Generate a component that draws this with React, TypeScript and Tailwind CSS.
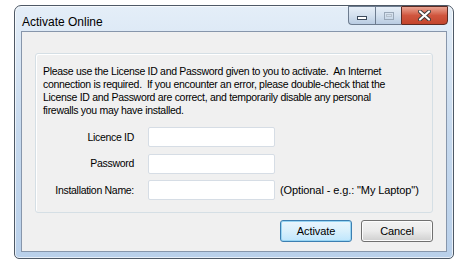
import React from 'react';

function TitleButtons() {
  return (
    <div className="flex h-[19px] items-stretch">
      <div className="w-[27px] flex items-center justify-center rounded-bl-[4px] border border-r-0 border-[#6d7c8f] bg-gradient-to-b from-[#e6eef7] via-[#d3e0ee] to-[#b9cce2]">
        <div className="w-[10px] h-[4px] mt-[5px] border border-[#3c4a5c] bg-white" />
      </div>
      <div className="w-[26px] flex items-center justify-center border border-r-0 border-[#6d7c8f] bg-gradient-to-b from-[#e6eef7] via-[#d3e0ee] to-[#b9cce2]">
        <div className="w-[10px] h-[8px] border border-[#9aa8b8] flex items-center justify-center">
          <div className="w-[6px] h-[3px] border border-[#b6c1cd]" />
        </div>
      </div>
      <div className="w-[47px] flex items-center justify-center rounded-br-[4px] border border-[#5b2b24] bg-gradient-to-b from-[#e8a493] via-[#d0553e] to-[#c3452d]">
        <svg width="13" height="11" viewBox="0 0 13 11">
          <path d="M2 1.5 L11 9.5 M11 1.5 L2 9.5" stroke="#3a3a3a" strokeWidth="4" strokeLinecap="round" />
          <path d="M2 1.5 L11 9.5 M11 1.5 L2 9.5" stroke="#ffffff" strokeWidth="2.2" strokeLinecap="round" />
        </svg>
      </div>
    </div>
  );
}

function Field({ label, note }: { label: string; note?: string }) {
  return (
    <div className="flex items-center h-[20px]">
      <div className="w-[98px] text-right text-black">{label}</div>
      <div className="ml-[14px] w-[127px] h-[20px] bg-white border border-[#d6dde5] rounded-[2px]" />
      {note && <div className="ml-[5px] text-[11px] tracking-[-0.1px] text-black">{note}</div>}
    </div>
  );
}

function Btn({ label, focused }: { label: string; focused?: boolean }) {
  return (
    <div
      className={
        'w-[72px] h-[22px] rounded-[3px] border flex items-center justify-center text-[11px] tracking-[-0.1px] text-black ' +
        (focused
          ? 'border-[#3c7fb1] bg-gradient-to-b from-[#eaf6fd] via-[#d9f0fc] to-[#bee6fd] shadow-[inset_0_0_0_1px_#98d5f3]'
          : 'border-[#707070] bg-gradient-to-b from-[#f2f2f2] via-[#ebebeb] to-[#cfcfcf] shadow-[inset_0_0_0_1px_#fcfcfc]')
      }
    >
      {label}
    </div>
  );
}

export default function App() {
  return (
    <div
      className="w-[463px] h-[266px] bg-white pt-[5px] pl-[14px] text-[10.5px] leading-[13px] tracking-[-0.3px]"
      style={{ fontFamily: '"Liberation Sans", Arial, sans-serif' }}
    >
      <div className="w-[440px] h-[254px] rounded-t-[7px] rounded-b-[5px] border border-[#4e5966] bg-gradient-to-b from-[#e4eef8] via-[#c6d9ee] to-[#b9d0ea] px-[6px] pb-[6px] flex flex-col shadow-[inset_0_0_0_1px_#ffffffaa]">
        <div className="h-[25px] flex items-start justify-between">
          <div className="pt-[9px] pl-[1px] text-[12px] leading-[14px] tracking-normal text-black">Activate Online</div>
          <div className="-mr-[1px]">
            <TitleButtons />
          </div>
        </div>
        <div className="flex-1 border border-[#8796ab] bg-[#f0f0f0] px-[13px] pt-[21px]">
          <div className="w-[398px] h-[160px] border border-[#d5dfe5] rounded-[3px] shadow-[inset_1px_1px_0_#ffffff] px-[7px] pt-[11px]">
            <p className="text-black whitespace-nowrap">
              Please use the License ID and Password given to you to activate.&nbsp; An Internet
              <br />
              connection is required.&nbsp; If you encounter an error, please double-check that the
              <br />
              License ID and Password are correct, and temporarily disable any personal
              <br />
              firewalls you may have installed.
            </p>
            <div className="mt-[10px] flex flex-col gap-[6.5px] -ml-[7px]">
              <Field label="Licence ID" />
              <Field label="Password" />
              <Field label="Installation Name:" note={'(Optional - e.g.: "My Laptop")'} />
            </div>
          </div>
          <div className="w-[398px] mt-[7px] flex justify-end gap-[9px]">
            <Btn label="Activate" focused />
            <Btn label="Cancel" />
          </div>
        </div>
      </div>
    </div>
  );
}
